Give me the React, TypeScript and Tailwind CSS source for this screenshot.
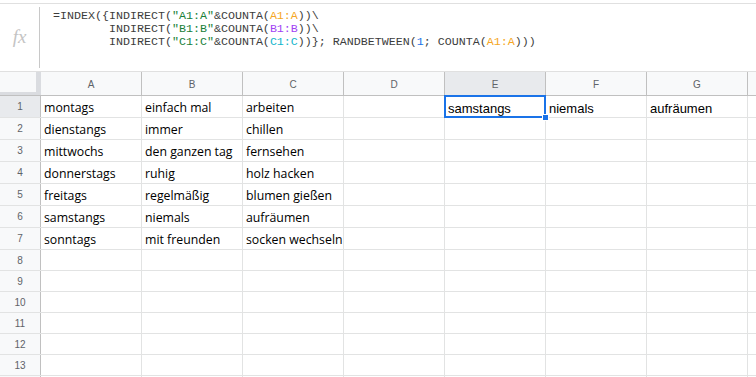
import React from "react";

const cols = ["A", "B", "C", "D", "E", "F", "G"];

const data: string[][] = [
  ["montags", "einfach mal", "arbeiten"],
  ["dienstangs", "immer", "chillen"],
  ["mittwochs", "den ganzen tag", "fernsehen"],
  ["donnerstags", "ruhig", "holz hacken"],
  ["freitags", "regelmäßig", "blumen gießen"],
  ["samstangs", "niemals", "aufräumen"],
  ["sonntags", "mit freunden", "socken wechseln"],
];

const result = ["samstangs", "niemals", "aufräumen"];

function Formula() {
  const s = "text-[#188038]";
  return (
    <div className="flex h-[69px] border-y border-[#e0e0e0]">
      <div className="flex w-[41px] shrink-0 items-center py-[3px]">
        <div className="flex h-full w-[40px] items-center justify-center border-r border-[#c8c8c8]">
          <span className="mb-[1px] font-['Liberation_Serif',serif] text-[19px] italic text-[#c4c4c4]">fx</span>
        </div>
      </div>
      <pre className="pl-[12px] pt-[6px] font-['Liberation_Mono',monospace] text-[11.67px] leading-[12.8px] text-[#3c3c3c]">
        {"=INDEX({INDIRECT("}
        <span className={s}>"A1:A"</span>
        {"&COUNTA("}
        <span className="text-[#f5a623]">A1:A</span>
        {"))\\\n        INDIRECT("}
        <span className={s}>"B1:B"</span>
        {"&COUNTA("}
        <span className="text-[#a142f4]">B1:B</span>
        {"))\\\n        INDIRECT("}
        <span className={s}>"C1:C"</span>
        {"&COUNTA("}
        <span className="text-[#12b5cb]">C1:C</span>
        {"))}; RANDBETWEEN("}
        <span className="text-[#1a73e8]">1</span>
        {"; COUNTA("}
        <span className="text-[#f5a623]">A1:A</span>
        {")))"}
      </pre>
    </div>
  );
}

function HeaderRow() {
  return (
    <div className="flex h-[24px] border-b border-[#c0c0c0] font-['Liberation_Sans',Arial,sans-serif] text-[10px] text-[#5f6368]">
      <div className="h-[23px] w-[41px] shrink-0 border-b-[3px] border-r-[5px] border-[#dadce0] bg-[#f8f9fa]" />
      {cols.map((c) => (
        <div
          key={c}
          className={`flex w-[101px] shrink-0 items-center justify-center border-r border-[#c0c0c0] pt-[1px] ${
            c === "E" ? "bg-[#e8eaed]" : "bg-[#f8f9fa]"
          }`}
        >
          {c}
        </div>
      ))}
      <div className="flex-1 bg-[#f8f9fa]" />
    </div>
  );
}

function Row({ n }: { n: number }) {
  const vals = data[n - 1] ?? [];
  const h = n <= 7 ? "h-[22px]" : "h-[21px]";
  return (
    <div className={`flex ${h} border-b border-[#e2e3e3]`}>
      <div
        className={`flex w-[41px] shrink-0 items-center justify-center border-r border-[#c0c0c0] font-['Liberation_Sans',Arial,sans-serif] text-[10px] text-[#5f6368] ${
          n === 1 ? "bg-[#e8eaed]" : "bg-[#f8f9fa]"
        }`}
      >
        {n}
      </div>
      {cols.map((c, i) => {
        let text = "";
        let font = "font-['Open_Sans',sans-serif] text-[12.3px] leading-[16px]";
        if (i < 3) text = vals[i] ?? "";
        const sel = n === 1 && c === "E";
        if (n === 1 && i >= 4) {
          text = result[i - 4];
          font = "font-['Liberation_Sans',Arial,sans-serif] text-[13px] leading-[15px]";
        }
        return (
          <div
            key={c}
            className={`relative flex w-[101px] shrink-0 items-end whitespace-nowrap border-r border-[#e2e3e3] pb-[1px] pl-[3px] text-black ${font} ${
              sel ? "z-10 overflow-visible" : "overflow-hidden"
            }`}
          >
            {text}
            {sel && (
              <div className="absolute -inset-px border-2 border-[#1a73e8]">
                <div className="absolute -bottom-[5px] -right-[5px] h-[7px] w-[7px] border border-white bg-[#1a73e8]" />
              </div>
            )}
          </div>
        );
      })}
      <div className="flex-1" />
    </div>
  );
}

export default function App() {
  return (
    <div className="h-[377px] w-[756px] overflow-hidden bg-white">
      <div className="h-[3px]" />
      <Formula />
      <HeaderRow />
      {Array.from({ length: 14 }, (_, i) => (
        <Row key={i} n={i + 1} />
      ))}
    </div>
  );
}
